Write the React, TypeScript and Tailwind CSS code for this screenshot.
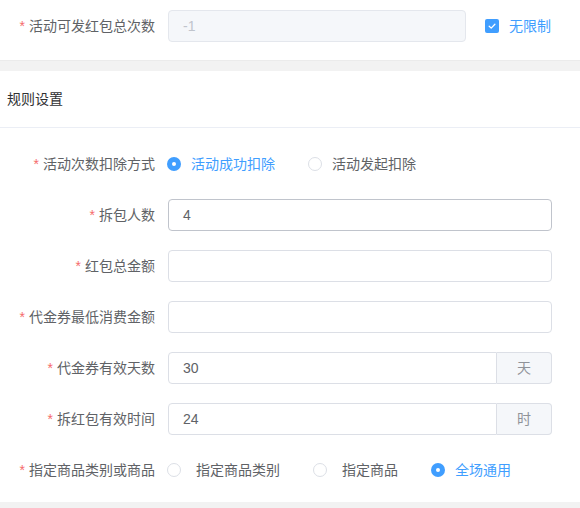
import React from "react";

const font = { fontFamily: '"Liberation Sans", "Noto Sans CJK SC", sans-serif' };

function Label({ text }: { text: string }) {
  return (
    <div className="w-[168px] shrink-0 pr-[13px] text-right text-[14px] leading-[32px] text-[#606266]">
      <span className="mr-1 text-[#f56c6c]">*</span>
      {text}
    </div>
  );
}

function Radio({ checked, label, gap = "ml-[10px]", className = "" }: { checked?: boolean; label: string; gap?: string; className?: string }) {
  return (
    <div className={`flex items-center ${className}`}>
      {checked ? (
        <span className="flex h-[14px] w-[14px] items-center justify-center rounded-full bg-[#409eff]">
          <span className="h-[4px] w-[4px] rounded-full bg-white" />
        </span>
      ) : (
        <span className="h-[14px] w-[14px] rounded-full border border-[#dcdfe6] bg-white" />
      )}
      <span className={`${gap} text-[14px] ${checked ? "text-[#409eff]" : "text-[#606266]"}`}>{label}</span>
    </div>
  );
}

function Input({ value, dark, append }: { value?: string; dark?: boolean; append?: string }) {
  return (
    <div className="flex h-[32px] w-[384px]">
      <div
        className={`flex flex-1 items-center border px-[14px] text-[14px] text-[#606266] ${dark ? "border-[#c0c4cc]" : "border-[#dcdfe6]"} ${append ? "rounded-l-[4px]" : "rounded-[4px]"}`}
      >
        {value}
      </div>
      {append && (
        <div className="flex w-[55px] items-center justify-center rounded-r-[4px] border border-l-0 border-[#dcdfe6] bg-[#f5f7fa] text-[14px] text-[#909399]">
          {append}
        </div>
      )}
    </div>
  );
}

export default function App() {
  return (
    <div className="w-[580px] h-[508px] overflow-hidden bg-white" style={font}>
      <div className="h-[60px] pt-[10px]">
        <div className="flex items-center">
          <Label text="活动可发红包总次数" />
          <div className="flex h-[32px] w-[298px] items-center rounded-[4px] border border-[#e4e7ed] bg-[#f5f7fa] px-[14px] text-[14px] text-[#c0c4cc]">
            -1
          </div>
          <div className="ml-[19px] flex items-center">
            <span className="flex h-[14px] w-[14px] items-center justify-center rounded-[2px] bg-[#409eff]">
              <svg width="10" height="10" viewBox="0 0 10 10" fill="none">
                <path d="M2.2 5.2 L4.2 7.1 L7.9 3.2" stroke="white" strokeWidth="1.3" strokeLinecap="round" strokeLinejoin="round" />
              </svg>
            </span>
            <span className="ml-[10px] text-[14px] text-[#409eff]">无限制</span>
          </div>
        </div>
      </div>
      <div className="h-[11px] border-t border-[#ebebeb] bg-[#f2f2f2]" />
      <div className="flex h-[57px] items-center border-b border-[#ebeef5] pl-[7px] text-[14px] text-[#303133]">
        规则设置
      </div>
      <div className="flex flex-col gap-[19px] pt-[20px] pb-[16px]">
        <div className="flex h-[32px] items-center">
          <Label text="活动次数扣除方式" />
          <Radio checked label="活动成功扣除" className="ml-[-1px]" />
          <Radio label="活动发起扣除" className="ml-[33px]" />
        </div>
        <div className="flex items-center">
          <Label text="拆包人数" />
          <Input value="4" dark />
        </div>
        <div className="flex items-center">
          <Label text="红包总金额" />
          <Input />
        </div>
        <div className="flex items-center">
          <Label text="代金券最低消费金额" />
          <Input />
        </div>
        <div className="flex items-center">
          <Label text="代金券有效天数" />
          <Input value="30" append="天" />
        </div>
        <div className="flex items-center">
          <Label text="拆红包有效时间" />
          <Input value="24" append="时" />
        </div>
        <div className="flex h-[32px] items-center">
          <Label text="指定商品类别或商品" />
          <Radio label="指定商品类别" gap="ml-[15px]" className="ml-[-1px]" />
          <Radio label="指定商品" gap="ml-[15px]" className="ml-[33px]" />
          <Radio checked label="全场通用" className="ml-[33px]" />
        </div>
      </div>
      <div className="h-[20px] bg-[#f2f2f2]" />
    </div>
  );
}
